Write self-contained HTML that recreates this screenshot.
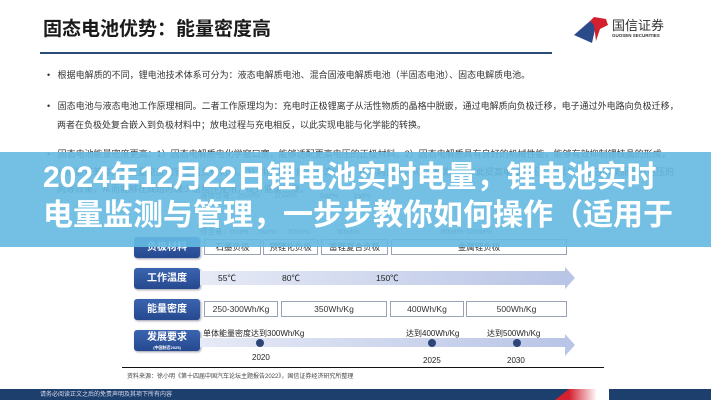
<!DOCTYPE html>
<html><head><meta charset="utf-8"><style>
*{margin:0;padding:0;box-sizing:border-box}
body{width:711px;height:400px;overflow:hidden;background:#fff;position:relative;font-family:"Liberation Sans","Noto Sans CJK SC",sans-serif;color:#222}
.a{position:absolute;white-space:nowrap}
.t{font-size:9px;color:#333}
.lab{position:absolute;left:134px;width:66px;height:21px;border-radius:3px;background:linear-gradient(#3b64b0,#25498f);color:#fff;font-size:10px;font-weight:bold;text-align:center;line-height:21px;box-shadow:1px 1px 2px #99a}
.cell{position:absolute;height:16px;border:1px solid #9aa3b5;font-size:8.5px;text-align:center;line-height:14px;color:#333;background:#fff}
.arrow{position:absolute;left:148px;height:14px;background:linear-gradient(90deg,#e6eaf6,#b9c5e6)}
.arrow:after{content:"";position:absolute;right:-10px;top:-4px;border-left:10px solid #b9c5e6;border-top:11px solid transparent;border-bottom:11px solid transparent}
.dot{position:absolute;width:8px;height:8px;border-radius:50%;background:#2d4577}
</style></head><body>
<div class="a" style="left:43px;top:14px;font-size:19px;font-weight:bold;color:#1a1a1a">固态电池优势：能量密度高</div>
<div class="a" style="left:40px;top:52px;width:512px;height:2px;background:#2a4a7a"></div>
<svg class="a" style="left:572px;top:15px" width="56" height="30" viewBox="0 0 56 30"><path d="M2 20 L18 6 L24 10 L20 28 Z" fill="#2a4a8a"/><path d="M18 6 L22 2 L34 4 L36 10 L28 14 L24 26 L22 10 Z" fill="#d4202e"/></svg>
<div class="a" style="left:612px;top:15px;font-size:13px;color:#333">国信证券</div>
<div class="a" style="left:612px;top:33px;font-size:4.5px;color:#333;font-weight:bold">GUOSEN SECURITIES</div>
<div class="a t" style="left:47px;top:68px">•&nbsp;&nbsp;&nbsp;根据电解质的不同，锂电池技术体系可分为：液态电解质电池、混合固液电解质电池（半固态电池）、固态电解质电池。</div>
<div class="a t" style="left:47px;top:99px">•&nbsp;&nbsp;&nbsp;固态电池与液态电池工作原理相同。二者工作原理均为：充电时正极锂离子从活性物质的晶格中脱嵌，通过电解质向负极迁移，电子通过外电路向负极迁移，</div>
<div class="a t" style="left:57px;top:118px">两者在负极处复合嵌入到负极材料中；放电过程与充电相反，以此实现电能与化学能的转换。</div>
<div class="a t" style="left:47px;top:147px">•&nbsp;&nbsp;&nbsp;固态电池能量密度更高：1）固态电解质电化学窗口宽，能够适配更高电压的正极材料。2）固态电解质具有良好的机械性能，能够有效抑制锂枝晶的形成，</div>
<div class="a t" style="left:57px;top:165px">从而能够兼容更高能量密度的锂金属负极材料。3）由于电解质的非流动性，电芯内部极片可以串联连接以此提高单体电压，实现与多电芯串联而提升电压的</div>
<div class="a t" style="left:57px;top:182px">同等效果，从而能够在成组时减少结构件使用，提升能量密度。</div>
<div class="a" style="left:200px;top:190px;font-size:7.5px;color:#667">液体含量：25wt%&nbsp;&nbsp;&nbsp;&nbsp;&nbsp;&nbsp;&nbsp;10wt%&nbsp;&nbsp;&nbsp;&nbsp;&nbsp;&nbsp;&nbsp;&nbsp;&nbsp;&nbsp;&nbsp;5wt%&nbsp;&nbsp;&nbsp;&nbsp;&nbsp;&nbsp;&nbsp;1wt%</div>
<div class="a" style="left:200px;top:226px;font-size:7.5px;color:#667">锂含量：0wt%&nbsp;&nbsp;&nbsp;&nbsp;&nbsp;5wt%&nbsp;&nbsp;&nbsp;&nbsp;&nbsp;30wt%&nbsp;&nbsp;&nbsp;&nbsp;&nbsp;&nbsp;&nbsp;&nbsp;&nbsp;&nbsp;&nbsp;&nbsp;&nbsp;50wt%&nbsp;&nbsp;&nbsp;&nbsp;&nbsp;&nbsp;&nbsp;&nbsp;&nbsp;&nbsp;&nbsp;&nbsp;&nbsp;&nbsp;&nbsp;&nbsp;&nbsp;&nbsp;&nbsp;&nbsp;&nbsp;&nbsp;&nbsp;&nbsp;&nbsp;&nbsp;&nbsp;&nbsp;&nbsp;&nbsp;&nbsp;&nbsp;&nbsp;&nbsp;&nbsp;&nbsp;&nbsp;&nbsp;&nbsp;80wt%-100wt%</div>
<div class="lab" style="top:237px">负极材料</div>
<div class="cell" style="left:204px;top:239px;width:57px">石墨负极</div>
<div class="cell" style="left:263px;top:239px;width:55px">预锂化负极</div>
<div class="cell" style="left:321px;top:239px;width:67px">富锂复合负极</div>
<div class="cell" style="left:391px;top:239px;width:176px">金属锂负极</div>
<div class="lab" style="top:268px">工作温度</div>
<div class="arrow" style="left:200px;top:271px;width:365px"></div>
<div class="a" style="left:218px;top:272px;font-size:8.5px">55℃</div>
<div class="a" style="left:282px;top:272px;font-size:8.5px">80℃</div>
<div class="a" style="left:376px;top:272px;font-size:8.5px">150℃</div>
<div class="lab" style="top:299px">能量密度</div>
<div class="cell" style="left:204px;top:301px;width:74px">250-300Wh/Kg</div>
<div class="cell" style="left:281px;top:301px;width:106px">350Wh/Kg</div>
<div class="cell" style="left:390px;top:301px;width:74px">400Wh/Kg</div>
<div class="cell" style="left:466px;top:301px;width:101px">500Wh/Kg</div>
<div class="lab" style="top:330px;line-height:16px">发展要求<div style="font-size:4px;line-height:4px">(中国制造2025)</div></div>
<div class="a" style="left:203px;top:328px;font-size:8px">单体能量密度达到300Wh/Kg</div>
<div class="a" style="left:406px;top:328px;font-size:8px">达到400Wh/Kg</div>
<div class="a" style="left:487px;top:328px;font-size:8px">达到500Wh/Kg</div>
<div class="arrow" style="left:200px;top:338px;width:365px;height:9px"></div>
<div class="dot" style="left:256px;top:339px"></div>
<div class="dot" style="left:428px;top:339px"></div>
<div class="dot" style="left:513px;top:339px"></div>
<div class="a" style="left:252px;top:353px;font-size:8px">2020</div>
<div class="a" style="left:423px;top:356px;font-size:8px">2025</div>
<div class="a" style="left:507px;top:356px;font-size:8px">2030</div>
<div class="a" style="left:122px;top:367px;width:482px;height:1px;background:#111"></div>
<div class="a" style="left:127px;top:371px;font-size:6px;color:#444">资料来源：徐小明《第十四届中国汽车论坛主题报告2022》，国信证券经济研究所整理</div>
<div class="a" style="left:0;top:389px;width:711px;height:11px;background:#1c3f6e"></div>
<div class="a" style="left:40px;top:389px;font-size:6px;color:#dde">请务必阅读正文之后的免责声明及其项下所有内容</div>
<div class="a" style="left:555px;top:389px;width:0;height:0;border-left:14px solid transparent;border-bottom:11px solid #d42030"></div>
<div class="a" style="left:569px;top:389px;width:40px;height:11px;background:linear-gradient(90deg,#d42030,#fff 70%)"></div>
<div class="a" style="left:0;top:152px;width:711px;height:95px;background:rgba(100,185,225,0.9)"></div>
<div class="a" style="left:43px;top:159px;font-size:30px;font-weight:bold;color:#fff;line-height:38px">2024年12月22日锂电池实时电量，锂电池实时<br>电量监测与管理，一步步教你如何操作（适用于</div>
</body></html>
